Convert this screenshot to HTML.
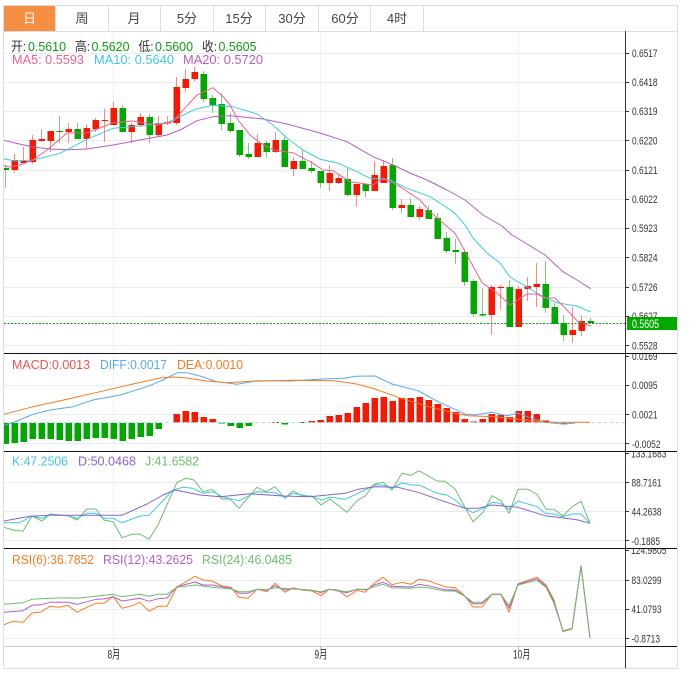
<!DOCTYPE html>
<html><head><meta charset="utf-8"><style>
html,body{margin:0;padding:0;background:#fff;width:689px;height:681px;overflow:hidden}
svg{display:block}
text{font-family:"Liberation Sans","Noto Sans CJK SC",sans-serif}
.ax{font-size:11px;fill:#333}
.l{font-size:13px}
.t{font-size:13px;fill:#444;text-anchor:middle}
.g{fill:#0f9a0f}
.k{fill:#333}
.ln{fill:none;stroke-width:1;stroke-linejoin:round}
</style></head><body>
<svg width="689" height="681" viewBox="0 0 689 681" xmlns="http://www.w3.org/2000/svg">
<!-- grid -->
<path d="M4 53.5H625M4 82.5H625M4 111.5H625M4 140.5H625M4 170.5H625M4 199.5H625M4 228.5H625M4 257.5H625M4 287.5H625M4 316.5H625M4 345.5H625M4 385.5H625M4 414.5H625M4 443.5H625M4 482.5H625M4 511.5H625M4 540.5H625M4 580.5H625M4 609.5H625M4 638.5H625" stroke="#e6edf2" fill="none"/>
<path d="M113.5 31V646M320.5 31V646M518.5 31V646" stroke="#eef2f6" fill="none"/>
<!-- tabs -->
<rect x="4" y="5" width="51" height="27" fill="#f68f42"/>
<path d="M3.5 5.5H677.5V668.5H3.5ZM3.5 31.5H677.5M55.5 5V31M108.5 5V31M160.5 5V31M213.5 5V31M265.5 5V31M318.5 5V31M370.5 5V31M423.5 5V31" fill="none" stroke="#ddd"/>
<text x="29.5" y="23" class="t" style="fill:#fff">日</text>
<text x="82" y="23" class="t">周</text>
<text x="134" y="23" class="t">月</text>
<text x="187" y="23" class="t">5分</text>
<text x="239" y="23" class="t">15分</text>
<text x="292" y="23" class="t">30分</text>
<text x="345" y="23" class="t">60分</text>
<text x="397" y="23" class="t">4时</text>
<!-- wicks -->
<g fill="none" stroke-width="1">
<path stroke="#f98c80" d="M14.5 154V173M23.5 147V163M32.5 135V164M41.5 129V142M50.5 131V152M68.5 123V143M86.5 124V149M95.5 118V132M104.5 109V142M113.5 102V125M131.5 123V143M140.5 113V127M158.5 116V137M167.5 116V125M176.5 77V125M185.5 69V92M194.5 67V81M257.5 134V157M275.5 132V153M293.5 157V176M329.5 165V191M338.5 174V184M356.5 184V207M374.5 161V191M383.5 160V183M401.5 199V213M419.5 206V220M491.5 285V335M500.5 285V310M518.5 286V327M527.5 277V301M536.5 263V307M572.5 307V343M581.5 315V336"/>
<path stroke="#7ccb7c" d="M5.5 165V188M59.5 116V143M77.5 123V139M122.5 105V132M149.5 114V143M203.5 71V102M212.5 95V113M221.5 93V130M230.5 113V133M239.5 130V157M248.5 143V159M266.5 141V158M284.5 137V167M302.5 149V169M311.5 161V173M320.5 171V188M347.5 168V196M365.5 183V197M392.5 158V210M410.5 198V217M428.5 206V219M437.5 213V239M446.5 232V253M455.5 239V264M464.5 249V286M473.5 279V317M482.5 288V317M509.5 280V327M545.5 261V313M554.5 303V324M563.5 315V341M590.5 318V324"/>
</g>
<!-- red bodies -->
<g fill="#f61800">
<rect x="11.5" y="160" width="6.5" height="10"/><rect x="20.5" y="161" width="6.5" height="2"/><rect x="29.5" y="140" width="6.5" height="22"/><rect x="38.5" y="139" width="6.5" height="2"/><rect x="47.5" y="131" width="6.5" height="10"/><rect x="65.5" y="129" width="6.5" height="3"/><rect x="83.5" y="128" width="6.5" height="11"/><rect x="92.5" y="120" width="6.5" height="9"/><rect x="101.5" y="120" width="6.5" height="1"/><rect x="110.5" y="108" width="6.5" height="17"/><rect x="128.5" y="125" width="6.5" height="7"/><rect x="137.5" y="117" width="6.5" height="8"/><rect x="155.5" y="123" width="6.5" height="12"/><rect x="164.5" y="122" width="6.5" height="1.5"/><rect x="173.5" y="87" width="6.5" height="36"/><rect x="182.5" y="79" width="6.5" height="9"/><rect x="191.5" y="72" width="6.5" height="7"/><rect x="254.5" y="143" width="6.5" height="14"/><rect x="272.5" y="140" width="6.5" height="12"/><rect x="290.5" y="161" width="6.5" height="8"/><rect x="326.5" y="173" width="6.5" height="10"/><rect x="335.5" y="178" width="6.5" height="5"/><rect x="353.5" y="184" width="6.5" height="11"/><rect x="371.5" y="175" width="6.5" height="16"/><rect x="380.5" y="166" width="6.5" height="17"/><rect x="398.5" y="205" width="6.5" height="3"/><rect x="416.5" y="209" width="6.5" height="8"/><rect x="488.5" y="287" width="6.5" height="28"/><rect x="497.5" y="287" width="6.5" height="1"/><rect x="515.5" y="289" width="6.5" height="38"/><rect x="524.5" y="286" width="6.5" height="3"/><rect x="533.5" y="284" width="6.5" height="3"/><rect x="569.5" y="330" width="6.5" height="5"/><rect x="578.5" y="321" width="6.5" height="10"/>
</g>
<!-- green bodies -->
<g fill="#00a800">
<rect x="4" y="168" width="5" height="2"/><rect x="56.5" y="131" width="6.5" height="1"/><rect x="74.5" y="129" width="6.5" height="10"/><rect x="119.5" y="108" width="6.5" height="24"/><rect x="146.5" y="117" width="6.5" height="18"/><rect x="200.5" y="74" width="6.5" height="25"/><rect x="209.5" y="98" width="6.5" height="7"/><rect x="218.5" y="104" width="6.5" height="20"/><rect x="227.5" y="123" width="6.5" height="8"/><rect x="236.5" y="130" width="6.5" height="25"/><rect x="245.5" y="154" width="6.5" height="3"/><rect x="263.5" y="143" width="6.5" height="9"/><rect x="281.5" y="140" width="6.5" height="27"/><rect x="299.5" y="161" width="6.5" height="8"/><rect x="308.5" y="168" width="6.5" height="3"/><rect x="317.5" y="171" width="6.5" height="12"/><rect x="344.5" y="179" width="6.5" height="16"/><rect x="362.5" y="184" width="6.5" height="7"/><rect x="389.5" y="165" width="6.5" height="43"/><rect x="407.5" y="205" width="6.5" height="12"/><rect x="425.5" y="210" width="6.5" height="9"/><rect x="434.5" y="218" width="6.5" height="21"/><rect x="443.5" y="238" width="6.5" height="13"/><rect x="452.5" y="250" width="6.5" height="2"/><rect x="461.5" y="252" width="6.5" height="30"/><rect x="470.5" y="281" width="6.5" height="33"/><rect x="479.5" y="314" width="6.5" height="1.5"/><rect x="506.5" y="287" width="6.5" height="40"/><rect x="542.5" y="284" width="6.5" height="24"/><rect x="551.5" y="307" width="6.5" height="17"/><rect x="560.5" y="323" width="6.5" height="12"/><rect x="587.5" y="321" width="6.5" height="2"/>
</g>
<!-- MA lines -->
<polyline class="ln" stroke="#b55cc8" points="4,140.3 15,143 33,147 50,149 67,149.7 87,149 113,145 140,140 167,135 180,130 197,120.7 213,116.7 230,115.7 240,116.7 263,119 287,124 320,133 347,141.7 373,156.7 393,165 410,173 427,180 447,190 465,200 483,215 502,226 512,235 537,250 545,255 563,271.7 577,280 590.7,288.7"/>
<polyline class="ln" stroke="#3cc9e0" points="4,158.7 15,161 33,160 60,153.3 87,139.3 113,128.3 147,125.3 167,122.7 180,116.7 195,109.3 213,105.3 233,106.7 257,114 273,125 287,138 303,150 320,159.3 337,162.7 357,171.7 370,178.3 390,180 407,188.3 430,196.7 443,205 455,213.3 465,225 473,238 487,253 500,263 510,277 527,287 543,296.7 558,303 577,306 590.7,312"/>
<polyline class="ln" stroke="#f0608f" points="4,165.7 10,167 20,165 33,160 47,150 67,133 87,132.7 100,128 113,122.7 133,121 157,125 173,121.7 177,116.7 197,95 213,87.7 223,96.7 230,105 238,120 250,135 260,142.7 273,150 293,152.7 313,163.3 323,170 333,170.7 350,181.7 373,185 383,178 400,186.7 420,200 430,211.7 455,233.3 467,255 482,282.7 497,293 510,305 527,294 537,294 545,298 555,298 567,310 578,321.7 591,326"/>
<path d="M4 323.5H625" stroke="#0a9a0a" stroke-dasharray="2 1.5" fill="none"/>
<!-- main header text -->
<text x="11" y="51" class="l k" textLength="15" lengthAdjust="spacingAndGlyphs">开:</text><text x="28" y="51" class="l g" textLength="38" lengthAdjust="spacingAndGlyphs">0.5610</text>
<text x="75" y="51" class="l k" textLength="15" lengthAdjust="spacingAndGlyphs">高:</text><text x="91.5" y="51" class="l g" textLength="38" lengthAdjust="spacingAndGlyphs">0.5620</text>
<text x="138.5" y="51" class="l k" textLength="15" lengthAdjust="spacingAndGlyphs">低:</text><text x="155" y="51" class="l g" textLength="38" lengthAdjust="spacingAndGlyphs">0.5600</text>
<text x="202" y="51" class="l k" textLength="15" lengthAdjust="spacingAndGlyphs">收:</text><text x="218.5" y="51" class="l g" textLength="38" lengthAdjust="spacingAndGlyphs">0.5605</text>
<text x="12" y="64" class="l" fill="#f0608f" textLength="72" lengthAdjust="spacingAndGlyphs">MA5: 0.5593</text>
<text x="94" y="64" class="l" fill="#3cc9e0" textLength="80" lengthAdjust="spacingAndGlyphs">MA10: 0.5640</text>
<text x="183" y="64" class="l" fill="#b55cc8" textLength="80" lengthAdjust="spacingAndGlyphs">MA20: 0.5720</text>
<!-- MACD histogram -->
<g fill="#00a800">
<rect x="4" y="423" width="5" height="21"/><rect x="11.5" y="423" width="6.5" height="20"/><rect x="20.5" y="423" width="6.5" height="19"/><rect x="29.5" y="423" width="6.5" height="16"/><rect x="38.5" y="423" width="6.5" height="16"/><rect x="47.5" y="423" width="6.5" height="16"/><rect x="56.5" y="423" width="6.5" height="17"/><rect x="65.5" y="423" width="6.5" height="18"/><rect x="74.5" y="423" width="6.5" height="18"/><rect x="83.5" y="423" width="6.5" height="16"/><rect x="92.5" y="423" width="6.5" height="15"/><rect x="101.5" y="423" width="6.5" height="15"/><rect x="110.5" y="423" width="6.5" height="16"/><rect x="119.5" y="423" width="6.5" height="18"/><rect x="128.5" y="423" width="6.5" height="16"/><rect x="137.5" y="423" width="6.5" height="14"/><rect x="146.5" y="423" width="6.5" height="13"/><rect x="155.5" y="423" width="6.5" height="6"/>
<rect x="218.5" y="422.5" width="6.5" height="1"/><rect x="227.5" y="423" width="6.5" height="3"/><rect x="236.5" y="423" width="6.5" height="5"/><rect x="245.5" y="423" width="6.5" height="3"/><rect x="281.5" y="423" width="6.5" height="1.5"/><rect x="560.5" y="423" width="6.5" height="1.5"/>
</g>
<g fill="#f61800">
<rect x="173.5" y="414" width="6.5" height="8.5"/><rect x="182.5" y="411" width="6.5" height="11.5"/><rect x="191.5" y="412" width="6.5" height="10.5"/><rect x="200.5" y="417" width="6.5" height="5.5"/><rect x="209.5" y="419" width="6.5" height="3.5"/>
<rect x="272.5" y="422" width="6.5" height="1"/><rect x="299.5" y="422" width="6.5" height="1"/><rect x="308.5" y="421" width="6.5" height="1.5"/><rect x="317.5" y="420" width="6.5" height="2.5"/><rect x="326.5" y="416" width="6.5" height="6.5"/><rect x="335.5" y="415" width="6.5" height="7.5"/><rect x="344.5" y="413" width="6.5" height="9.5"/><rect x="353.5" y="407" width="6.5" height="15.5"/><rect x="362.5" y="403" width="6.5" height="19.5"/><rect x="371.5" y="398" width="6.5" height="24.5"/><rect x="380.5" y="397" width="6.5" height="25.5"/><rect x="389.5" y="401" width="6.5" height="21.5"/><rect x="398.5" y="398" width="6.5" height="24.5"/><rect x="407.5" y="398" width="6.5" height="24.5"/><rect x="416.5" y="397" width="6.5" height="25.5"/><rect x="425.5" y="400" width="6.5" height="22.5"/><rect x="434.5" y="404" width="6.5" height="18.5"/><rect x="443.5" y="408" width="6.5" height="14.5"/><rect x="452.5" y="412" width="6.5" height="10.5"/><rect x="461.5" y="419" width="6.5" height="3.5"/><rect x="470.5" y="421.5" width="6.5" height="1"/><rect x="479.5" y="419" width="6.5" height="3.5"/><rect x="488.5" y="414" width="6.5" height="8.5"/><rect x="497.5" y="415" width="6.5" height="7.5"/><rect x="506.5" y="417" width="6.5" height="5.5"/><rect x="515.5" y="411" width="6.5" height="11.5"/><rect x="524.5" y="411" width="6.5" height="11.5"/><rect x="533.5" y="414" width="6.5" height="8.5"/><rect x="542.5" y="420.5" width="6.5" height="2"/>
</g>
<path d="M4 422.5H625" stroke="#a8e0f0" stroke-dasharray="3 3" stroke-width="1" fill="none"/>
<polyline class="ln" stroke="#55aaee" points="4,425.3 17,421 33,414.3 50,410 73,406.7 93,400 120,395 147,386.7 163,380 177,372.7 187,372.7 200,376 217,381.7 237,384.3 257,380.7 290,381 323,379 345,378.3 355,376.3 375,376 392,384 418,390.7 438,401.7 455,409.3 465,414 475,415 492,412.3 507,415.7 518,413.3 532,418.3 545,422.3 562,424 575,423.3"/>
<polyline class="ln" stroke="#f97a20" points="4,414.3 33,406.7 67,399.3 100,391.7 133,384 160,378 173,377 187,378 207,381 227,382.7 250,381.3 290,380.3 333,380.7 345,382.3 358,384.3 375,389 398,397.3 425,405.7 455,413.3 468,415.7 495,416.7 518,419.3 545,422.3 590,422.3"/>
<text x="12" y="369" class="l" fill="#f65050" textLength="78" lengthAdjust="spacingAndGlyphs">MACD:0.0013</text>
<text x="100" y="369" class="l" fill="#55aaee" textLength="67" lengthAdjust="spacingAndGlyphs">DIFF:0.0017</text>
<text x="177" y="369" class="l" fill="#f97a20" textLength="66" lengthAdjust="spacingAndGlyphs">DEA:0.0010</text>
<!-- KDJ -->
<polyline class="ln" stroke="#6dbd6d" points="4,527.3 13,530 23,531.3 32,516 42,521 50,514 68,515.7 77,520 87,509 96,509 104,520 113,521.7 122,537.7 132,534.3 140,534 149,539.3 158,525 177,482.3 186,478.3 194,480 203,491.7 212,489.3 222,499 230,499 239,508.3 257,487.3 266,491.7 275,486.7 285,498.3 293,490.7 302,496 312,496 321,505 330,499 347,512.3 357,500.7 365,496 374,484.3 383,482.3 392,490 402,473.3 411,475.3 419,470.7 437,481 445,481.3 455,489 473,521.7 483,512.3 492,495.7 501,500.7 509,513.3 518,489.3 528,489.3 537,494.3 546,509.3 554,509.3 563,516 572,506.7 581,501.3 590,523.3"/>
<polyline class="ln" stroke="#3cc9e0" points="4,522.7 20,522.7 32,516 42,518.3 50,514.7 68,515.7 77,518.3 87,513.3 96,513.3 104,518.3 113,518.3 122,522.7 140,516 149,515.3 173,490 183,487.3 193,488.3 203,493.3 213,491.7 222,496.7 239,500.7 257,491.7 275,492.7 285,497.3 293,493.3 312,496.7 322,500 330,497.3 345,499.3 358,493.3 375,485 383,485 392,488.3 402,483 412,485 420,485.3 437,493.3 447,495 455,500 465,508.3 473,512.7 483,508.3 492,502.3 500,503.3 509,509.3 518,501 537,506.7 545,513.3 555,514.3 563,516.7 572,514 581,514 590,523.3"/>
<polyline class="ln" stroke="#8a62c8" points="4,521 30,516.3 50,515.3 100,515.3 122,515.3 147,504 163,495 175,490 200,495 220,496.7 250,493.7 283,496 310,496.7 345,493.3 358,489.3 375,486.7 398,487.3 418,492.3 442,500.7 465,508.3 478,508.3 492,505 518,507.3 545,515.7 562,517.7 578,520 590,523.3"/>
<text x="12" y="465.5" class="l" fill="#3cc9e0" textLength="56" lengthAdjust="spacingAndGlyphs">K:47.2506</text>
<text x="78" y="465.5" class="l" fill="#8a62c8" textLength="58" lengthAdjust="spacingAndGlyphs">D:50.0468</text>
<text x="145" y="465.5" class="l" fill="#6dbd6d" textLength="54" lengthAdjust="spacingAndGlyphs">J:41.6582</text>
<!-- RSI -->
<polyline class="ln" stroke="#f97a20" points="4,624.7 13,621.3 23,622.3 32,613 41,612 50,606.3 59,607.3 68,605.3 77,612.3 87,607.3 96,603.3 104,603.3 113,596.3 122,608.3 132,605.7 140,602.3 149,611.3 158,606.3 167,606.3 177,587 195,576.3 203,580 212,581 222,586 231,587.3 239,597.3 248,598.3 257,589.3 267,591.7 275,583.3 285,592.3 293,587.7 302,590 312,591 321,595.7 329,589.3 338,590 347,597 357,590.3 365,592.3 374,583.3 383,577.3 392,584.7 402,582.3 411,584.3 419,579.3 428,580.7 445,586.7 455,587.7 464,595 473,607 482,607 492,594.3 501,594.3 509,612.3 518,583.7 537,577.3 546,585 554,600 563,631.7 572,629 581,566 590,637.7"/>
<polyline class="ln" stroke="#b55cc8" points="4,612.3 23,610.7 32,605.3 41,604.7 50,602.3 68,602.3 77,604.3 96,599.3 104,599 113,596.7 122,601 140,598.3 149,601.3 158,598.7 167,598 177,586.7 195,582 203,585 212,585 231,588.3 239,593.3 248,593.3 257,589.3 267,590.3 275,585.7 285,590 293,588.7 312,590.3 321,592.7 329,589.3 347,592.7 357,589.3 367,590 374,585 383,582.3 392,586.3 411,587 419,584.3 428,585.7 445,589.7 455,590 464,595.7 473,603.7 482,603.7 492,594.3 501,594.3 509,608.3 518,584.3 537,578.7 546,586.3 554,601.7 563,631 572,628.3 581,566 590,637.7"/>
<polyline class="ln" stroke="#6dbd6d" points="4,604.3 23,602.7 32,599.3 50,598.3 68,597.7 77,598.3 96,596.3 113,594.3 122,596.7 140,594.3 149,596.3 158,594.3 167,594.3 177,587.3 195,585 212,587.3 231,589 239,591.7 248,591.7 257,589.3 267,589.7 275,587.7 293,589 312,590.3 321,591.7 329,589.3 347,591.7 357,589.3 367,589.3 374,586.7 383,584.3 392,587.7 411,588.3 419,587 428,587.7 445,591 455,591 464,595.7 473,602.3 482,602.3 492,594.3 501,594.3 509,605.7 518,585 537,580.3 546,587.3 554,603.3 563,631 572,628.3 581,566 590,637.7"/>
<text x="12" y="564" class="l" fill="#f97a20" textLength="82" lengthAdjust="spacingAndGlyphs">RSI(6):36.7852</text>
<text x="103" y="564" class="l" fill="#b55cc8" textLength="90" lengthAdjust="spacingAndGlyphs">RSI(12):43.2625</text>
<text x="202" y="564" class="l" fill="#6dbd6d" textLength="90" lengthAdjust="spacingAndGlyphs">RSI(24):46.0485</text>
<!-- x axis -->
<path d="M4 646.5H625" stroke="#ccc" fill="none"/>
<path d="M113.5 646V650M320.5 646V650M518.5 646V650" stroke="#bbb" fill="none"/>
<text x="107.5" y="658.5" fill="#333" textLength="13" lengthAdjust="spacingAndGlyphs" style="font-size:12px">8月</text>
<text x="314.5" y="658.5" fill="#333" textLength="13" lengthAdjust="spacingAndGlyphs" style="font-size:12px">9月</text>
<text x="513" y="658.5" fill="#333" textLength="17.5" lengthAdjust="spacingAndGlyphs" style="font-size:12px">10月</text>
<!-- y-axis labels -->
<svg x="625" y="31" width="52" height="322">
<g transform="translate(-625,-31)">
<text x="632" y="57" class="ax" textLength="25.5" lengthAdjust="spacingAndGlyphs">0.6517</text>
<text x="632" y="86" class="ax" textLength="25.5" lengthAdjust="spacingAndGlyphs">0.6418</text>
<text x="632" y="115" class="ax" textLength="25.5" lengthAdjust="spacingAndGlyphs">0.6319</text>
<text x="632" y="144.5" class="ax" textLength="25.5" lengthAdjust="spacingAndGlyphs">0.6220</text>
<text x="632" y="174" class="ax" textLength="25.5" lengthAdjust="spacingAndGlyphs">0.6121</text>
<text x="632" y="203" class="ax" textLength="25.5" lengthAdjust="spacingAndGlyphs">0.6022</text>
<text x="632" y="232" class="ax" textLength="25.5" lengthAdjust="spacingAndGlyphs">0.5923</text>
<text x="632" y="261.5" class="ax" textLength="25.5" lengthAdjust="spacingAndGlyphs">0.5824</text>
<text x="632" y="291" class="ax" textLength="25.5" lengthAdjust="spacingAndGlyphs">0.5726</text>
<text x="632" y="320" class="ax" textLength="25.5" lengthAdjust="spacingAndGlyphs">0.5627</text>
<text x="632" y="349.5" class="ax" textLength="25.5" lengthAdjust="spacingAndGlyphs">0.5528</text>
</g></svg>
<svg x="625" y="353" width="52" height="98">
<g transform="translate(-625,-353)">
<text x="632" y="360" class="ax" textLength="25.5" lengthAdjust="spacingAndGlyphs">0.0169</text>
<text x="632" y="389" class="ax" textLength="25.5" lengthAdjust="spacingAndGlyphs">0.0095</text>
<text x="632" y="418.5" class="ax" textLength="25.5" lengthAdjust="spacingAndGlyphs">0.0021</text>
<text x="632" y="448" class="ax" textLength="28.5" lengthAdjust="spacingAndGlyphs">-0.0052</text>
</g></svg>
<svg x="625" y="451" width="52" height="97">
<g transform="translate(-625,-451)">
<text x="631" y="457.5" class="ax" textLength="35.5" lengthAdjust="spacingAndGlyphs">133.1683</text>
<text x="631.5" y="486.5" class="ax" textLength="30" lengthAdjust="spacingAndGlyphs">88.7161</text>
<text x="631.5" y="515.5" class="ax" textLength="30" lengthAdjust="spacingAndGlyphs">44.2638</text>
<text x="631.5" y="545" class="ax" textLength="28.5" lengthAdjust="spacingAndGlyphs">-0.1885</text>
</g></svg>
<svg x="625" y="548" width="52" height="98">
<g transform="translate(-625,-548)">
<text x="631" y="554" class="ax" textLength="35.5" lengthAdjust="spacingAndGlyphs">124.9805</text>
<text x="631.5" y="584" class="ax" textLength="30" lengthAdjust="spacingAndGlyphs">83.0299</text>
<text x="631.5" y="613" class="ax" textLength="30" lengthAdjust="spacingAndGlyphs">41.0793</text>
<text x="631.5" y="642.5" class="ax" textLength="28.5" lengthAdjust="spacingAndGlyphs">-0.8713</text>
</g></svg>
<!-- price tag -->
<rect x="627" y="317" width="50" height="13" fill="#00a800"/>
<text x="632" y="328" fill="#fff" textLength="27" lengthAdjust="spacingAndGlyphs" style="font-size:12px">0.5605</text>
<!-- axis, ticks and separators -->
<path d="M625.5 31V668M625 53.5H629M625 82.5H629M625 111.5H629M625 140.5H629M625 170.5H629M625 199.5H629M625 228.5H629M625 257.5H629M625 287.5H629M625 316.5H629M625 345.5H629M625 356.5H629M625 385.5H629M625 414.5H629M625 443.5H629M625 453.5H629M625 482.5H629M625 511.5H629M625 540.5H629M625 550.5H629M625 580.5H629M625 609.5H629M625 638.5H629" stroke="#333" fill="none"/>
<path d="M4 353.5H677M4 451.5H677M4 548.5H677M625 646.5H677" stroke="#111" fill="none"/>
</svg>
</body></html>
